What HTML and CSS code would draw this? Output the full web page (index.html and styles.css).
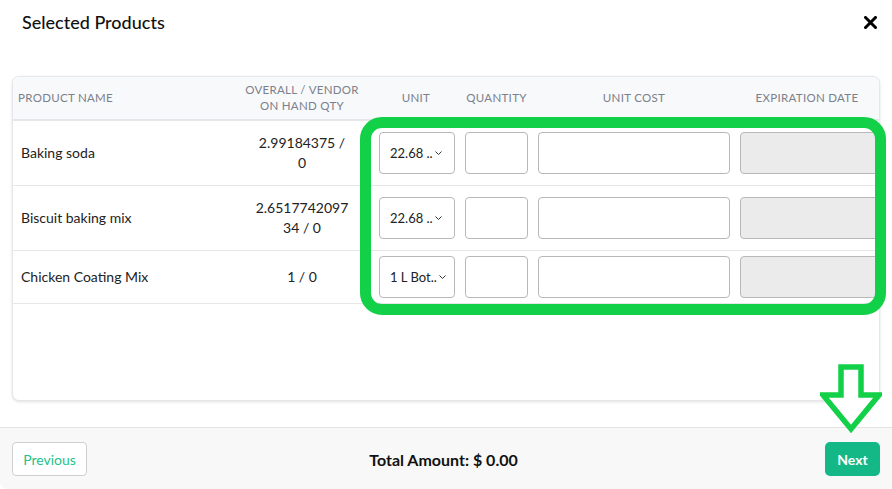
FILE: index.html
```html
<!DOCTYPE html>
<html>
<head>
<meta charset="utf-8">
<link rel="stylesheet" href="styles.css">
</head>
<body>
<div class="modal">
  <div class="modal-header">
    <h1 class="title">Selected Products</h1>
    <svg class="close" width="13" height="13" viewBox="0 0 13 13"><path d="M1.5 1.5L11.5 11.5M11.5 1.5L1.5 11.5" stroke="#000" stroke-width="3" stroke-linecap="square"/></svg>
  </div>
  <div class="modal-body">
    <div class="card">
      <table class="grid">
        <colgroup>
          <col class="c-name"><col class="c-qty"><col class="c-unit"><col class="c-quant"><col class="c-cost"><col class="c-exp">
        </colgroup>
        <thead>
          <tr>
            <th class="left">Product Name</th>
            <th>Overall / Vendor<br>On Hand Qty</th>
            <th>Unit</th>
            <th>Quantity</th>
            <th>Unit Cost</th>
            <th>Expiration Date</th>
          </tr>
        </thead>
        <tbody>
          <tr class="tall">
            <td class="name">Baking soda</td>
            <td class="num">2.99184375 /<br>0</td>
            <td><div class="select"><span>22.68 ..</span><svg width="7" height="5" viewBox="0 0 7 5"><path d="M0.5 0.5L3.5 3.5L6.5 0.5" fill="none" stroke="#333" stroke-width="1"/></svg></div></td>
            <td><div class="input"></div></td>
            <td><div class="input"></div></td>
            <td class="exp"><div class="input disabled"></div></td>
          </tr>
          <tr class="tall">
            <td class="name">Biscuit baking mix</td>
            <td class="num">2.6517742097<br>34 / 0</td>
            <td><div class="select"><span>22.68 ..</span><svg width="7" height="5" viewBox="0 0 7 5"><path d="M0.5 0.5L3.5 3.5L6.5 0.5" fill="none" stroke="#333" stroke-width="1"/></svg></div></td>
            <td><div class="input"></div></td>
            <td><div class="input"></div></td>
            <td class="exp"><div class="input disabled"></div></td>
          </tr>
          <tr class="short">
            <td class="name">Chicken Coating Mix</td>
            <td class="num">1 / 0</td>
            <td><div class="select"><span>1 L Bot..</span><svg width="7" height="5" viewBox="0 0 7 5"><path d="M0.5 0.5L3.5 3.5L6.5 0.5" fill="none" stroke="#333" stroke-width="1"/></svg></div></td>
            <td><div class="input"></div></td>
            <td><div class="input"></div></td>
            <td class="exp"><div class="input disabled"></div></td>
          </tr>
        </tbody>
      </table>
    </div>
  </div>
  <div class="modal-footer">
    <button class="btn-prev">Previous</button>
    <div class="total">Total Amount: $ 0.00</div>
    <button class="btn-next">Next</button>
  </div>
  <div class="highlight"></div>
  <svg class="arrow" width="62" height="70" viewBox="0 0 62 70"><polygon points="21,3 41,3 41,31 59,31 31,65 3,31 21,31" fill="#fff" stroke="#12d048" stroke-width="5.5" stroke-linejoin="miter"/></svg>
</div>
</body>
</html>
```

FILE: styles.css
```css
* { box-sizing: border-box; }
html, body { margin: 0; padding: 0; background: #fff; }
body { font-family: "Lato", "Noto Sans", sans-serif; color: #222; }

.modal {
  position: relative;
  width: 892px;
  height: 489px;
  display: flex;
  flex-direction: column;
  background: #fff;
  overflow: hidden;
}

.modal-header {
  height: 44px;
  padding: 0 15px 0 22px;
  display: flex;
  align-items: center;
  justify-content: space-between;
}
.title {
  margin: 0;
  font-size: 18px;
  font-weight: 500;
  color: #111;
}

.modal-body {
  flex: 1;
  padding: 32px 12px 26px 12px;
}
.card {
  height: 325px;
  border: 1px solid #e6e7ea;
  border-radius: 7px;
  box-shadow: 0 1px 3px rgba(0,0,0,0.12);
  overflow: hidden;
  background: #fff;
}

.grid {
  border-collapse: collapse;
  table-layout: fixed;
  width: 866px;
}
.c-name { width: 219px; }
.c-qty { width: 140px; }
.c-unit { width: 88px; }
.c-quant { width: 73px; }
.c-cost { width: 202px; }
.c-exp { width: 144px; }

.grid thead tr { height: 43px; background: #f8f9fb; }
.grid th {
  font-size: 11.5px;
  font-weight: 400;
  letter-spacing: 0.3px;
  text-transform: uppercase;
  color: #7b808b;
  text-align: center;
  line-height: 16px;
  padding: 0;
  border-bottom: 2px solid #e5e7eb;
}
.grid th.left { text-align: left; padding-left: 5px; }

.grid td {
  padding: 0 5px;
  border-bottom: 1px solid #e6e7ea;
  font-size: 14px;
  vertical-align: middle;
}
.grid tr.tall { height: 65px; }
.grid tr.short { height: 53px; }
.grid td.name { padding-left: 8px; color: #222; }
.grid td.num { text-align: center; line-height: 20px; color: #222; padding: 0 20px; }
.grid td.exp { padding-right: 0; }

.select {
  width: 76px;
  height: 42px;
  margin-left: 2px;
  border: 1px solid #b8b8b8;
  border-radius: 4px;
  display: flex;
  align-items: center;
  padding-left: 10px;
  font-size: 13px;
  color: #222;
}
.select svg { margin-left: 2px; margin-top: 1px; }

.input {
  height: 42px;
  border: 1px solid #b8b8b8;
  border-radius: 4px;
  background: #fff;
}
.input.disabled { background: #ebebeb; }

.modal-footer {
  height: 62px;
  border-top: 1px solid #e3e3e3;
  background: #f8f8f8;
  border-bottom-left-radius: 8px;
  padding: 1px 12px 0 12px;
  display: flex;
  align-items: center;
  justify-content: space-between;
}
.btn-prev {
  width: 75px;
  height: 34px;
  border: 1px solid #cfcfcf;
  border-radius: 4px;
  background: #fff;
  color: #22c38a;
  font-family: inherit;
  font-size: 14px;
  padding: 0;
}
.total {
  font-size: 16px;
  font-weight: 700;
  color: #111;
  margin-right: 25px;
}
.btn-next {
  width: 55px;
  height: 34px;
  border: none;
  border-radius: 5px;
  background: #14b886;
  color: #fff;
  font-family: inherit;
  font-size: 14px;
  font-weight: 700;
  padding: 0;
}

.highlight {
  position: absolute;
  left: 360px;
  top: 117px;
  width: 526px;
  height: 198px;
  border: 11px solid #12d048;
  border-radius: 22px;
  pointer-events: none;
}
.arrow {
  position: absolute;
  left: 820px;
  top: 364px;
}
```
